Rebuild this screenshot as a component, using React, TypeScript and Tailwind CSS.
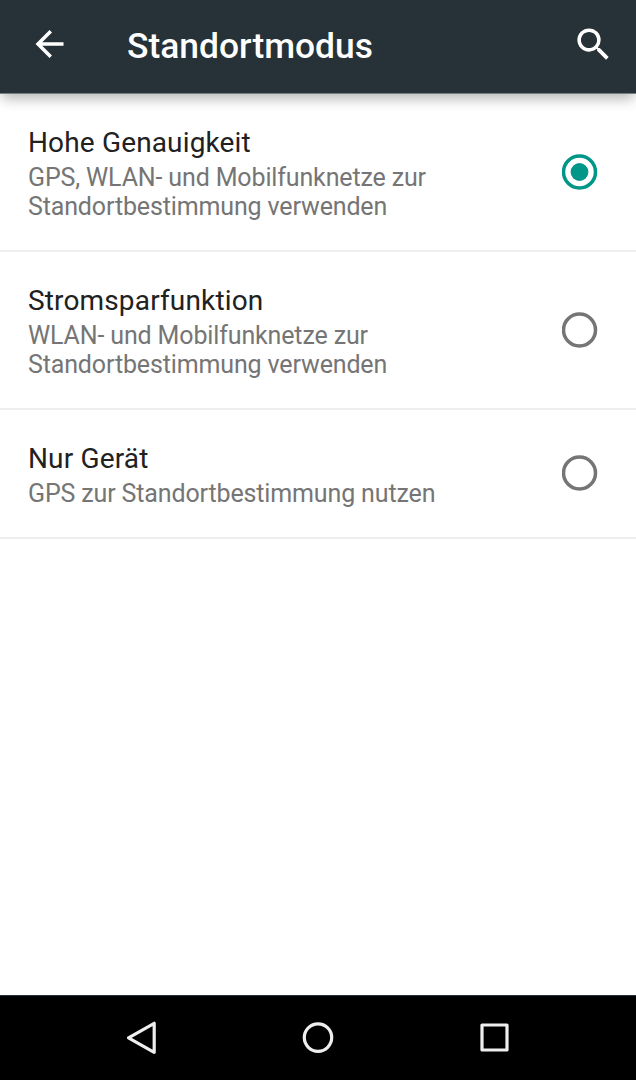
import React from "react";

type Mode = { title: string; lines: string[]; selected: boolean; height: string; radioOffset: string };

const modes: Mode[] = [
  { title: "Hohe Genauigkeit", lines: ["GPS, WLAN- und Mobilfunknetze zur", "Standortbestimmung verwenden"], selected: true, height: "h-[158px]", radioOffset: "mb-0" },
  { title: "Stromsparfunktion", lines: ["WLAN- und Mobilfunknetze zur", "Standortbestimmung verwenden"], selected: false, height: "h-[158px]", radioOffset: "mb-0" },
  { title: "Nur Gerät", lines: ["GPS zur Standortbestimmung nutzen"], selected: false, height: "h-[129px]", radioOffset: "mb-px" },
];

function Radio({ selected }: { selected: boolean }) {
  return (
    <svg className={selected ? "h-9 w-9 text-[#009688]" : "h-9 w-9 text-[#757575]"} viewBox="0 0 36 36" fill="none">
      <circle cx="17.5" cy="18" r="16" stroke="currentColor" strokeWidth="3.5" />
      {selected && <circle cx="17.5" cy="18" r="8.9" fill="currentColor" />}
    </svg>
  );
}

export default function App() {
  return (
    <div className="flex h-[1080px] w-[636px] flex-col overflow-hidden bg-white font-[Roboto,sans-serif]">
      <header className="z-10 flex h-[94px] shrink-0 items-center border-b border-[#767d80] bg-[#263238] text-white shadow-[0_7px_12px_-2px_rgba(0,0,0,0.28)]">
        <svg className="mb-1.5 ml-7 h-[42px] w-[42px]" viewBox="0 0 24 24" fill="currentColor">
          <path d="M20.3 11H8.13l5.59-5.59L12.3 4l-8 8 8 8 1.41-1.41L8.13 13H20.3v-2z" />
        </svg>
        <h1 className="mb-px ml-[57px] flex-1 text-[35.4px] leading-10 font-medium">Standortmodus</h1>
        <svg className="mr-[21px] mb-[5px] h-[43px] w-[43px]" viewBox="0 0 24 24" fill="currentColor">
          <path d="M15.5 14h-.79l-.28-.27A6.471 6.471 0 0 0 16 9.5 6.5 6.5 0 1 0 9.5 16c1.61 0 3.09-.59 4.23-1.57l.27.28v.79l5 4.99L20.49 19l-4.99-5zm-6 0C7.01 14 5 11.99 5 9.5S7.01 5 9.5 5 14 7.01 14 9.5 11.99 14 9.5 14z" />
        </svg>
      </header>
      <main className="flex-1">
        {modes.map((mode) => (
          <div key={mode.title} className={`flex items-center border-b-2 border-[#eeeeee] pr-[38px] pl-7 ${mode.height}`}>
            <div className="flex-1 pt-0.5">
              <h2 className="pb-0.5 text-[28px] leading-9 tracking-[0.15px] text-[#212121]">{mode.title}</h2>
              {mode.lines.map((line) => (
                <p key={line} className="text-[25px] leading-[29px] tracking-[-0.14px] text-[#757575]">{line}</p>
              ))}
            </div>
            <div className={`shrink-0 ${mode.radioOffset}`}>
              <Radio selected={mode.selected} />
            </div>
          </div>
        ))}
      </main>
      <nav className="flex h-[85px] shrink-0 items-center justify-center gap-[134px] border-t border-[#263238] bg-black text-[#eeeeee]">
        <svg className="h-[42px] w-[42px]" viewBox="0 0 42 42" fill="none" stroke="currentColor" strokeWidth="3.2" strokeLinejoin="round"><path d="M33.2 6.3v29L7.5 20.8z" /></svg>
        <svg className="h-[42px] w-[42px]" viewBox="0 0 42 42" fill="none" stroke="currentColor" strokeWidth="3.2"><circle cx="21" cy="20.6" r="13.7" /></svg>
        <svg className="h-[42px] w-[42px]" viewBox="0 0 42 42" fill="none" stroke="currentColor" strokeWidth="3.2" strokeLinejoin="round"><rect x="9" y="8" width="25" height="25" /></svg>
      </nav>
    </div>
  );
}
